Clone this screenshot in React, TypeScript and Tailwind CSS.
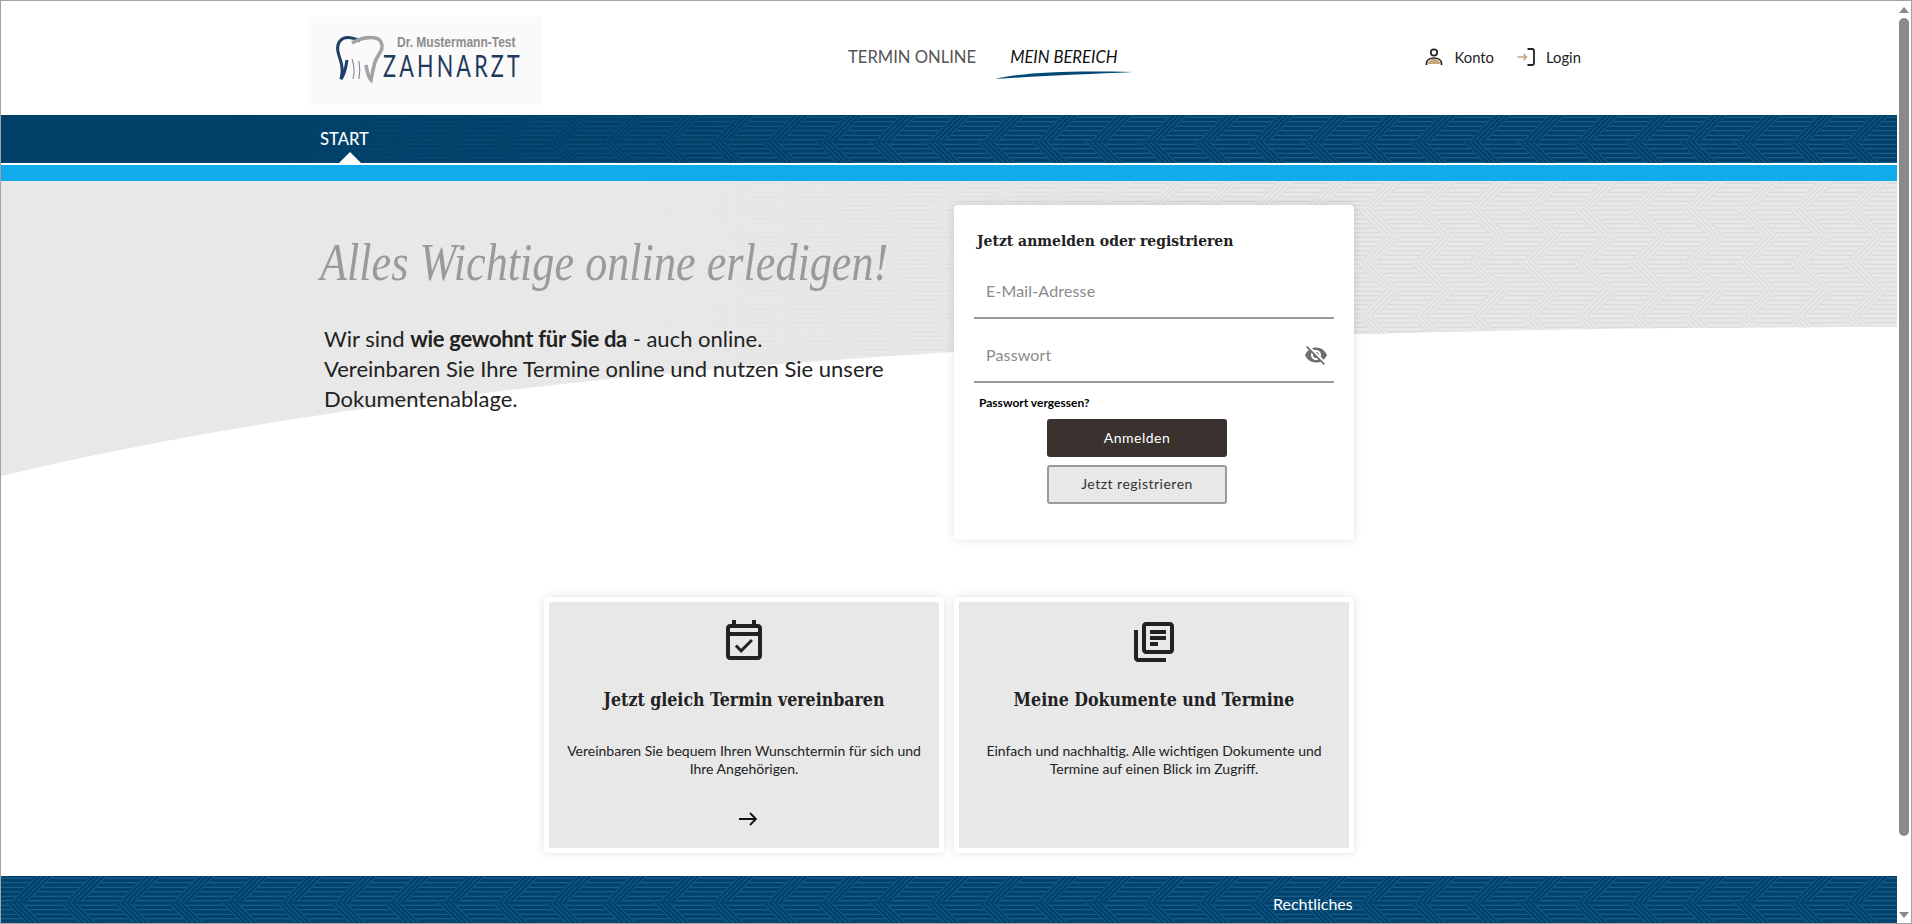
import { MdOutlineEventAvailable, MdOutlineLibraryBooks, MdVisibilityOff } from 'react-icons/md';

const serif = "[font-family:'DejaVu_Serif_Condensed','DejaVu_Serif',serif]";

const rows = Array.from({ length: 12 }, (_, i) => 2.25 + i * 4.5);
const strands = [1.5, 6.5, 11.5, 16.5];

function WeaveTile({ stroke, base }: { stroke: string; base: string }) {
  return (
    <g fill="none" stroke={stroke} strokeWidth="0.8">
      {rows.map((y) => (
        <path key={y} d={`M0 ${y} H54`} />
      ))}
      <path d="M10 25 L35 0 H53 L28 25 Z" fill={base} stroke="none" />
      <path d="M4 27 H22 L47 52 H29 Z" fill={base} stroke="none" />
      {strands.map((d) => (
        <path key={`up${d}`} d={`M${10 + d} 25 L${35 + d} 0`} />
      ))}
      {strands.map((d) => (
        <path key={`down${d}`} d={`M${4 + d} 27 L${29 + d} 52`} />
      ))}
    </g>
  );
}

function BandPattern({ id, base, fade }: { id: string; base: string; fade?: boolean }) {
  return (
    <svg
      className={
        fade
          ? 'absolute inset-0 h-full w-full [mask-image:linear-gradient(to_right,transparent_12%,black_50%)]'
          : 'absolute inset-0 h-full w-full'
      }
    >
      <defs>
        <pattern id={id} width="54" height="54" patternUnits="userSpaceOnUse">
          <WeaveTile stroke="#26709c" base={base} />
        </pattern>
      </defs>
      <rect width="100%" height="100%" fill={`url(#${id})`} />
    </svg>
  );
}

function HeroBackdrop() {
  const shape = 'M0 0 H1896 V146 C999 146 399 199 0 295 Z';
  return (
    <svg className="absolute left-0 top-0" width="1896" height="300" viewBox="0 0 1896 300">
      <defs>
        <pattern id="hero-weave" width="54" height="54" patternUnits="userSpaceOnUse">
          <WeaveTile stroke="#cfcfcf" base="#e8e8e8" />
        </pattern>
        <linearGradient id="hero-fade" gradientUnits="userSpaceOnUse" x1="650" y1="0" x2="1250" y2="0">
          <stop offset="0" stopColor="#000" />
          <stop offset="1" stopColor="#fff" />
        </linearGradient>
        <mask id="hero-mask">
          <rect width="1896" height="300" fill="url(#hero-fade)" />
        </mask>
      </defs>
      <path d={shape} fill="#e8e8e8" />
      <path d={shape} fill="url(#hero-weave)" mask="url(#hero-mask)" />
    </svg>
  );
}

function Logo() {
  return (
    <div className="mt-[16px] h-[88px] w-[234px] shrink-0 self-start bg-[#fafafa]">
      <svg width="234" height="88" viewBox="0 0 234 88">
        <path
          d="M52 24 C44 20 36 19 32 24 C27 30 31 38 33 45 C35 52 34 58 33 62 C37 57 38 50 39 43"
          fill="none"
          stroke="#1f3f66"
          strokeWidth="3"
        />
        <path
          d="M44 26 C54 20 69 18 73 25 C77 33 69 38 67 45 C65 52 64 58 63 63 C60 60 59 54 58 48"
          fill="none"
          stroke="#a3a3a3"
          strokeWidth="3.6"
        />
        <path d="M44 42 C46 48 47 55 45 62 M51 44 C52 50 52 56 51 62" fill="none" stroke="#7d8998" strokeWidth="1.1" />
        <text
          transform="translate(89 30) scale(0.925 1.15)"
          className="[font-family:'Liberation_Sans',sans-serif] text-[13px] font-bold"
          fill="#8c8c8c"
        >
          Dr. Mustermann-Test
        </text>
        <text
          transform="translate(75 60) scale(0.72 1)"
          textLength="190"
          lengthAdjust="spacing"
          className="[font-family:Lato,sans-serif] text-[30px]"
          fill="#1f3a5c"
        >
          ZAHNARZT
        </text>
      </svg>
    </div>
  );
}

function PersonIcon() {
  return (
    <svg width="18" height="18" viewBox="0 0 18 18" fill="none">
      <path d="M3 16 C3 12.5 6 11 9 11 C12 11 15 12.5 15 16 Z" fill="#c4a878" />
      <circle cx="9" cy="4.5" r="3.2" stroke="#222" strokeWidth="1.7" />
      <path d="M1.5 17 V15.5 C1.5 12 5 10 9 10 C13 10 16.5 12 16.5 15.5 V17" stroke="#222" strokeWidth="1.7" />
    </svg>
  );
}

function LoginIcon() {
  return (
    <svg width="18" height="18" viewBox="0 0 18 18" fill="none">
      <path d="M10.5 1 H15 A2 2 0 0 1 17 3 V15 A2 2 0 0 1 15 17 H10.5" stroke="#222" strokeWidth="1.8" />
      <path d="M0.5 9 H9.5 M6.5 6 L9.5 9 L6.5 12" stroke="#c4a878" strokeWidth="1.6" />
    </svg>
  );
}

function Swoosh() {
  return (
    <svg className="absolute left-[-15px] top-[26px]" width="138" height="8" viewBox="0 0 138 8">
      <path d="M0 8 C28 1.5 70 -0.5 138 1 C96 3 44 5 0 8 Z" fill="#004a75" />
    </svg>
  );
}

function Header() {
  return (
    <header className="flex h-[114px] items-center bg-white pl-[307px]">
      <Logo />
      <nav className="mb-[2px] ml-[306px] flex items-center gap-[34px] text-[16.6px]">
        <a className="text-[#555]">TERMIN ONLINE</a>
        <a className="relative italic text-[#111]">
          MEIN BEREICH
          <Swoosh />
        </a>
      </nav>
      <div className="mb-[2px] ml-[307px] flex items-center text-[14.8px] text-[#222]">
        <PersonIcon />
        <span className="ml-[12px]">Konto</span>
        <span className="ml-[23px]">
          <LoginIcon />
        </span>
        <span className="ml-[11px]">Login</span>
      </div>
    </header>
  );
}

function SubNav() {
  return (
    <div className="relative h-[48px] bg-[#004069] pl-[319px]">
      <BandPattern id="nav-weave" base="#004069" fade />
      <span className="relative block pt-[12px] text-[16.6px] font-medium leading-[24px] text-white">START</span>
      <div className="absolute bottom-0 left-[338px] h-0 w-0 border-x-[11px] border-b-[11px] border-x-transparent border-b-white" />
    </div>
  );
}

function LoginCard() {
  return (
    <div className="relative h-[335px] w-[400px] rounded-[4px] bg-white pt-[25px] shadow-[0_0_10px_rgba(0,0,0,0.12)]">
      <h2 className={`${serif} pl-[23px] text-[15.5px] font-bold leading-[22px] text-[#222]`}>
        Jetzt anmelden oder registrieren
      </h2>
      <div className="ml-[20px] mt-[12px] flex h-[55px] w-[360px] items-center border-b-2 border-[#999] pl-[12px] pt-[1px] text-[16px] tracking-[0.15px] text-[#8a8a8a]">
        E-Mail-Adresse
      </div>
      <div className="ml-[20px] mt-[9px] flex h-[55px] w-[360px] items-center justify-between border-b-2 border-[#999] pl-[12px] pr-[6px] pt-[1px] text-[16px] tracking-[0.15px] text-[#8a8a8a]">
        Passwort
        <MdVisibilityOff size={24} className="text-[#6e6e6e]" />
      </div>
      <a className="ml-[25px] mt-[12px] block text-[12px] font-bold leading-[16px] text-black">Passwort vergessen?</a>
      <button className="ml-[93px] mt-[8px] block h-[38px] w-[180px] rounded-[3px] bg-[#39322e] pb-[2px] text-[14px] tracking-[0.5px] text-white">
        Anmelden
      </button>
      <button className="ml-[93px] mt-[8px] block h-[39px] w-[180px] rounded-[3px] border-2 border-[#9a9a9a] bg-[#e8e8e8] pb-[2px] text-[14px] tracking-[0.5px] text-[#333]">
        Jetzt registrieren
      </button>
    </div>
  );
}

function InfoCard({
  icon,
  title,
  text,
  arrow,
}: {
  icon: React.ReactNode;
  title: string;
  text: string;
  arrow?: boolean;
}) {
  return (
    <div className="h-[256px] w-[400px] rounded-[4px] bg-white p-[5px] shadow-[0_0_10px_rgba(0,0,0,0.12)]">
      <div className="flex h-full flex-col items-center bg-[#e8e8e8] pt-[16px] text-center text-[#222]">
        {icon}
        <h3 className={`${serif} mt-[20px] text-[17.6px] font-bold leading-[28px]`}>{title}</h3>
        <p className="mt-[28px] w-[360px] text-[14px] leading-[17.5px]">{text}</p>
        {arrow && (
          <svg className="ml-[8px] mt-[35px]" width="18" height="14" viewBox="0 0 18 14" fill="none">
            <path d="M0 7 H17 M11 1 L17 7 L11 13" stroke="#111" strokeWidth="1.9" />
          </svg>
        )}
      </div>
    </div>
  );
}

function Scrollbar() {
  return (
    <div className="flex w-[14px] shrink-0 flex-col items-center bg-white">
      <div className="mt-[6px] h-0 w-0 border-x-[5px] border-b-[6px] border-x-transparent border-b-[#8a8a8a]" />
      <div className="mt-[5px] h-[818px] w-[10px] rounded-full bg-[#8a8a8a]" />
      <div className="mb-[5px] mt-auto h-0 w-0 border-x-[5px] border-t-[6px] border-x-transparent border-t-[#8a8a8a]" />
    </div>
  );
}

export default function App() {
  return (
    <div className="flex h-[924px] w-[1912px] overflow-hidden border border-[#a3a3a3] bg-white [font-family:Lato,sans-serif]">
      <div className="flex w-[1896px] flex-col">
        <Header />
        <SubNav />
        <div className="h-[2px] bg-white" />
        <div className="h-[16px] bg-[#10abeb]" />
        <main className="relative flex-1">
          <HeroBackdrop />
          <div className="relative flex pl-[319px] pt-[24px]">
            <div className="w-[634px]">
              <h1 className="mt-[24px] h-[68px] origin-left scale-x-[0.85] whitespace-nowrap [font-family:'Liberation_Serif',serif] text-[52px] italic leading-[68px] text-[#9a9a9a]">
                Alles Wichtige online erledigen!
              </h1>
              <p className="ml-[4px] mt-[27px] w-[600px] text-[22px] leading-[30px] text-[#222]">
                Wir sind <b className="tracking-[-0.3px]">wie gewohnt für Sie da</b> - auch online.
                <br />
                Vereinbaren Sie Ihre Termine online und nutzen Sie unsere
                <br />
                Dokumentenablage.
              </p>
            </div>
            <LoginCard />
          </div>
          <div className="relative ml-[543px] mt-[57px] flex gap-[10px]">
            <InfoCard
              icon={<MdOutlineEventAvailable size={48} />}
              title="Jetzt gleich Termin vereinbaren"
              text="Vereinbaren Sie bequem Ihren Wunschtermin für sich und Ihre Angehörigen."
              arrow
            />
            <InfoCard
              icon={<MdOutlineLibraryBooks size={48} />}
              title="Meine Dokumente und Termine"
              text="Einfach und nachhaltig. Alle wichtigen Dokumente und Termine auf einen Blick im Zugriff."
            />
          </div>
        </main>
        <footer className="relative h-[47px] bg-[#00426d]">
          <BandPattern id="footer-weave" base="#00426d" />
          <a className="absolute left-[1272px] top-[16px] text-[16px] leading-[24px] text-white">Rechtliches</a>
        </footer>
      </div>
      <Scrollbar />
    </div>
  );
}
